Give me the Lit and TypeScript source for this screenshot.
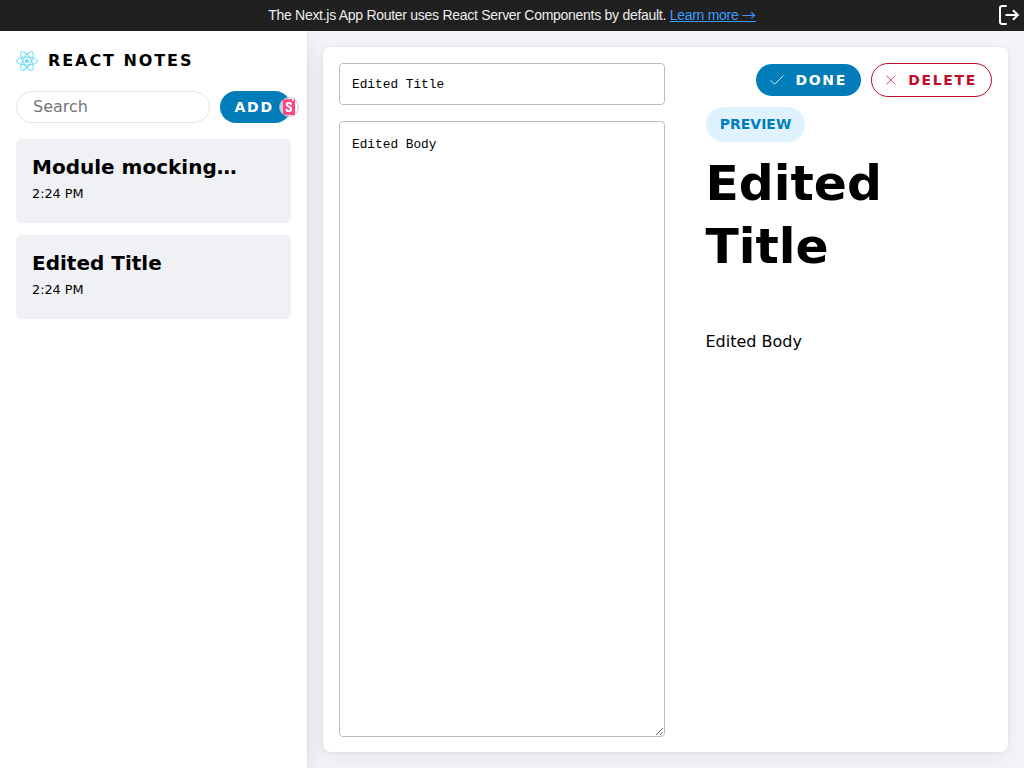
import { LitElement, html, css, svg } from "lit";
import { customElement, state } from "lit/decorators.js";

interface Note {
  title: string;
  time: string;
}

const reactLogo = svg`
  <circle r="2.05" fill="#61dafb"></circle>
  <g stroke="#61dafb" fill="none">
    <ellipse rx="11" ry="4.2"></ellipse>
    <ellipse rx="11" ry="4.2" transform="rotate(60)"></ellipse>
    <ellipse rx="11" ry="4.2" transform="rotate(120)"></ellipse>
  </g>`;

@customElement("app-root")
export class AppRoot extends LitElement {
  static styles = css`
    :host {
      display: flex;
      flex-direction: column;
      height: 100vh;
      overflow: hidden;
      font-family: "DejaVu Sans", sans-serif;
      font-size: 16px;
      line-height: 1.4;
      color: #000;
      background: #f4f5f9;
    }
    * {
      box-sizing: border-box;
    }
    .banner {
      flex: none;
      display: grid;
      grid-template-columns: 1fr auto 1fr;
      align-items: center;
      height: 31px;
      background: #202020;
      color: #ececec;
      font: 14px/21px "Liberation Sans", Arial, sans-serif;
      letter-spacing: -0.28px;
    }
    .banner-text {
      grid-column: 2;
      height: 21px;
      white-space: pre;
    }
    .banner a {
      color: #3b9cff;
      text-decoration: underline;
    }
    .arrow {
      font-family: "Noto Sans CJK JP", sans-serif;
      line-height: 1;
    }
    .logout {
      justify-self: end;
      display: block;
      margin: 0 2px 1px 0;
    }
    .main {
      flex: 1;
      display: flex;
      min-height: 0;
      overflow: hidden;
    }
    .sidebar {
      flex: none;
      width: 307px;
      background: #fff;
      box-shadow: 0 8px 24px rgba(0, 0, 0, 0.1), 0 2px 2px rgba(0, 0, 0, 0.1);
      padding: 16px;
    }
    .brand {
      display: flex;
      align-items: center;
      gap: 10px;
      height: 27px;
      font-weight: 700;
      letter-spacing: 1.92px;
    }
    .brand span {
      line-height: 24px;
      padding-top: 1px;
    }
    .tools {
      display: flex;
      align-items: center;
      gap: 10px;
      margin: 17px 0 16px;
      height: 32px;
    }
    .search {
      width: 194px;
      height: 32px;
      padding: 0 16px 2px;
      border: 1px solid #e4e6eb;
      border-radius: 100px;
      font: 16px "DejaVu Sans", sans-serif;
      outline: none;
    }
    .btn {
      display: flex;
      align-items: center;
      height: 32px;
      padding: 0 14px;
      border: 0;
      border-radius: 100px;
      background: #037dba;
      color: #fff;
      font: 700 14px "DejaVu Sans", sans-serif;
      letter-spacing: 1.68px;
    }
    .add {
      position: relative;
      width: 71px;
      padding-left: 14.6px;
    }
    .badge {
      position: absolute;
      left: 59px;
      top: 6px;
    }
    .note {
      height: 84px;
      margin-bottom: 12px;
      padding: 14px 16px;
      border-radius: 5px;
      background: #f0f1f5;
    }
    .note strong {
      display: block;
      font-size: 20px;
      line-height: 28px;
    }
    .note small {
      display: block;
      margin-top: 4px;
      font-size: 12.8px;
      line-height: 18px;
    }
    .editor {
      flex: 1;
      display: flex;
      margin: 16px 16px 16px;
      padding: 16px 16px 15px;
      border-radius: 8px;
      background: #fff;
      box-shadow: 0 0 5px rgba(0, 0, 0, 0.07), 0 8px 24px rgba(0, 0, 0, 0.06);
      min-width: 0;
    }
    .form {
      flex: none;
      width: 326px;
      display: flex;
      flex-direction: column;
      gap: 16px;
    }
    .field {
      display: block;
      width: 100%;
      margin: 0;
      padding: 12px;
      border: 1px solid #bcbcbc;
      border-radius: 4px;
      background: #fff;
      color: #000;
      font: 12.8px/17.92px "Liberation Mono", monospace;
      outline: none;
    }
    .title-field {
      height: 42px;
    }
    .body-field {
      flex: 1;
      line-height: 21px;
    }
    .preview {
      flex: 1;
      min-width: 0;
      padding-left: 40.5px;
    }
    .actions {
      display: flex;
      align-items: center;
      justify-content: flex-end;
      gap: 10px;
      height: 34px;
    }
    .done {
      width: 105px;
    }
    .done svg {
      margin-right: 11.6px;
    }
    .delete {
      width: 121px;
      height: 34px;
      border: 1px solid #bd0d2a;
      background: #fff;
      color: #bd0d2a;
    }
    .delete svg {
      margin-right: 12.6px;
    }
    .label {
      display: inline-block;
      height: 35px;
      margin-top: 10px;
      padding: 0 13.8px 0 14.2px;
      border-radius: 100px;
      background: #def3ff;
      color: #037dba;
      font-size: 14px;
      font-weight: 700;
      line-height: 35px;
      vertical-align: top;
    }
    h1 {
      margin: 10px 0 0;
      font-size: 48.8px;
      line-height: 63px;
    }
    .body {
      margin: 52px 0 0;
      line-height: 24px;
    }
  `;

  @state() private notes: Note[] = [
    { title: "Module mocking…", time: "2:24 PM" },
    { title: "Edited Title", time: "2:24 PM" },
  ];
  @state() private noteTitle = "Edited Title";
  @state() private noteBody = "Edited Body";

  render() {
    return html`
      <div class="banner">
        <div class="banner-text">The Next.js App Router uses React Server Components by default. <a>Learn more <span class="arrow">→</span></a></div>
        <svg class="logout" width="24" height="24" viewBox="0 0 24 24" fill="none" stroke="#fff" stroke-width="2">
          <path d="M8.7 3H4.5Q2 3 2 5v14q0 2 2.5 2h4.2M7.5 12H20M15 7.2 19.9 12l-4.9 4.8"></path>
        </svg>
      </div>
      <div class="main">
        <section class="sidebar">
          <div class="brand">
            <svg width="22" height="20" viewBox="-11.5 -10.23174 23 20.46348">${reactLogo}</svg>
            <span>REACT NOTES</span>
          </div>
          <div class="tools">
            <input class="search" placeholder="Search" />
            <button class="btn add">
              ADD
              <svg class="badge" width="20" height="20" viewBox="0 0 20 20">
                <circle cx="10" cy="10" r="9.4" fill="#fff" fill-opacity=".72" stroke="#b9bec3" stroke-width=".9"></circle>
                <path d="M3.6 2.6 16 1.8V18.2L4.1 17.7z" fill="#ff4785"></path>
                <path d="M12 7.8C12 6.4 11.3 5.8 9.9 5.8 8.5 5.8 7.8 6.4 7.8 7.4c0 2.3 4.3 1.8 4.3 4.7 0 1.5-.8 2.1-2.3 2.1-1.6 0-2.3-.8-2.3-2.2" fill="none" stroke="#fff" stroke-width="2.1"></path>
                <path d="m12.9 2 .1 2.2 1-.7.8.6V1.9z" fill="#fff"></path>
              </svg>
            </button>
          </div>
          ${this.notes.map(
            (n) => html`<div class="note"><strong>${n.title}</strong><small>${n.time}</small></div>`
          )}
        </section>
        <section class="editor">
          <form class="form">
            <input
              class="field title-field"
              .value=${this.noteTitle}
              @input=${(e: Event) => (this.noteTitle = (e.target as HTMLInputElement).value)}
            />
            <textarea
              class="field body-field"
              .value=${this.noteBody}
              @input=${(e: Event) => (this.noteBody = (e.target as HTMLTextAreaElement).value)}
            ></textarea>
          </form>
          <div class="preview">
            <div class="actions">
              <button class="btn done">
                <svg width="14" height="10" viewBox="0 0 14 10" fill="none" stroke="#fff" stroke-width=".8">
                  <path d="M.4 5.2 4.8 9.3 13.5.5"></path>
                </svg>
                DONE
              </button>
              <button class="btn delete">
                <svg width="10" height="10" viewBox="0 0 10 10" fill="none" stroke="#bd0d2a" stroke-width=".8">
                  <path d="M.2.2 9.8 9.8M9.8.2.2 9.8"></path>
                </svg>
                DELETE
              </button>
            </div>
            <div class="label">PREVIEW</div>
            <h1>${this.noteTitle}</h1>
            <p class="body">${this.noteBody}</p>
          </div>
        </section>
      </div>
    `;
  }
}
